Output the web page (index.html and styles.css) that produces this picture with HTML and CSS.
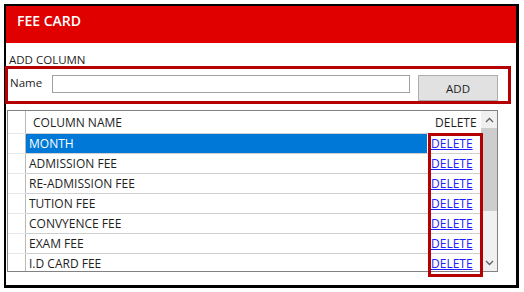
FILE: index.html
```html
<!DOCTYPE html>
<html lang="en">
<head>
    <meta charset="UTF-8">
    <title>Fee Card</title>
    <link rel="stylesheet" href="styles.css">
</head>
<body>

<div class="window">
    <div class="title-bar">FEE CARD</div>

    <div class="add-label">ADD COLUMN</div>
    <div class="add-box">
        <label class="name-label" for="column-name">Name</label>
        <input type="text" id="column-name" class="name-input">
        <button class="add-btn">ADD</button>
    </div>

    <div class="grid">
        <div class="grid-body">
            <table>
                <thead>
                    <tr>
                        <th class="row-head"></th>
                        <th class="col-name">COLUMN NAME</th>
                        <th class="col-delete">DELETE</th>
                    </tr>
                </thead>
                <tbody>
                    <tr class="selected">
                        <td class="row-head"></td>
                        <td>MONTH</td>
                        <td class="del"><a href="#">DELETE</a></td>
                    </tr>
                    <tr>
                        <td class="row-head"></td>
                        <td>ADMISSION FEE</td>
                        <td class="del"><a href="#">DELETE</a></td>
                    </tr>
                    <tr>
                        <td class="row-head"></td>
                        <td>RE-ADMISSION FEE</td>
                        <td class="del"><a href="#">DELETE</a></td>
                    </tr>
                    <tr>
                        <td class="row-head"></td>
                        <td>TUTION FEE</td>
                        <td class="del"><a href="#">DELETE</a></td>
                    </tr>
                    <tr>
                        <td class="row-head"></td>
                        <td>CONVYENCE FEE</td>
                        <td class="del"><a href="#">DELETE</a></td>
                    </tr>
                    <tr>
                        <td class="row-head"></td>
                        <td>EXAM FEE</td>
                        <td class="del"><a href="#">DELETE</a></td>
                    </tr>
                    <tr>
                        <td class="row-head"></td>
                        <td>I.D CARD FEE</td>
                        <td class="del"><a href="#">DELETE</a></td>
                    </tr>
                </tbody>
            </table>
        </div>
        <div class="scrollbar">
            <div class="arrow">
                <svg width="9" height="6" viewBox="0 0 9 6"><path d="M1 5 L4.5 1.5 L8 5" fill="none" stroke="#606060" stroke-width="1.3"/></svg>
            </div>
            <div class="track">
                <div class="thumb"></div>
            </div>
            <div class="arrow">
                <svg width="9" height="6" viewBox="0 0 9 6"><path d="M1 1 L4.5 4.5 L8 1" fill="none" stroke="#606060" stroke-width="1.3"/></svg>
            </div>
        </div>
        <!-- highlight round the delete links, runs past the grid bottom -->
        <div class="delete-highlight"></div>
    </div>
</div>

</body>
</html>
```

FILE: styles.css
```css
body {
    margin: 0;
    background-color: #fff;
    font-family: "Open Sans", "Noto Sans", sans-serif;
    font-size: 12px;
    color: #1e1e1e;
}
.window {
    margin: 4px 0 0 4px;
    width: 510px;
    height: 279px;
    border: solid #000;
    border-width: 2px 3px 3px 2px;
    background-color: #fff;
}
.title-bar {
    height: 37px;
    box-sizing: border-box;
    padding: 5px 0 0 11px;
    background-color: #e10000;
    color: #fff;
    font-size: 14px;
    font-weight: 600;
}
.add-label {
    margin-top: 10px;
    padding-left: 3px;
    height: 13px;
    line-height: 13px;
    font-size: 11.5px;
}
.add-box {
    margin-left: -1px;
    width: 498px;
    height: 32px;
    border: 3px solid #b40000;
    display: flex;
    align-items: flex-start;
    padding-left: 2px;
}
.name-label {
    margin-top: 6px;
    width: 42px;
    font-size: 11.5px;
    line-height: 16px;
}
.name-input {
    margin: 6px 0 0 0;
    width: 358px;
    height: 18px;
    box-sizing: border-box;
    border: 1px solid #a0a0a0;
    padding: 0;
}
.add-btn {
    margin: 6px 0 0 8px;
    width: 80px;
    height: 26px;
    border: 1px solid #adadad;
    background-color: #e1e1e1;
    font-family: "Open Sans", sans-serif;
    font-size: 11.5px;
    color: #1e1e1e;
    padding: 0;
}
.grid {
    position: relative;
    margin: 6px 0 0 1px;
    width: 489px;
    height: 160px;
    border: 1px solid #828282;
    display: flex;
}
.grid-body {
    flex: 1;
    overflow: hidden;
}
.grid table {
    width: 100%;
    border-collapse: collapse;
    table-layout: fixed;
}
.grid th {
    height: 22px;
    font-weight: normal;
    text-align: left;
    padding: 0;
    border-bottom: 1px solid #d0d0d0;
}
.grid td {
    height: 19px;
    padding: 0 0 0 3px;
    border-bottom: 1px solid #cfcfcf;
    white-space: nowrap;
    line-height: 19px;
}
.grid .row-head {
    width: 17px;
    padding: 0;
    border-right: 1px solid #b8b8b8;
    border-bottom-color: #e6e6e6;
    background-color: #fff;
}
.grid .col-name {
    padding-left: 7px;
}
.grid .col-delete {
    width: 46px;
    padding-left: 8px;
}
.grid .del {
    padding-left: 4px;
}
.selected td {
    background-color: #0078d7;
    color: #fff;
}
.del a {
    color: #2020ff;
    text-decoration: underline;
}
.selected .del {
    background-color: #fff;
}
.delete-highlight {
    position: absolute;
    left: 420px;
    top: 22px;
    width: 49px;
    height: 138px;
    border: 3px solid #b40000;
}
.scrollbar {
    width: 16px;
    background-color: #f0f0f0;
    display: flex;
    flex-direction: column;
}
.arrow {
    height: 17px;
    display: flex;
    align-items: center;
    justify-content: center;
}
.track {
    flex: 1;
}
.thumb {
    height: 83px;
    background-color: #cdcdcd;
}
```
